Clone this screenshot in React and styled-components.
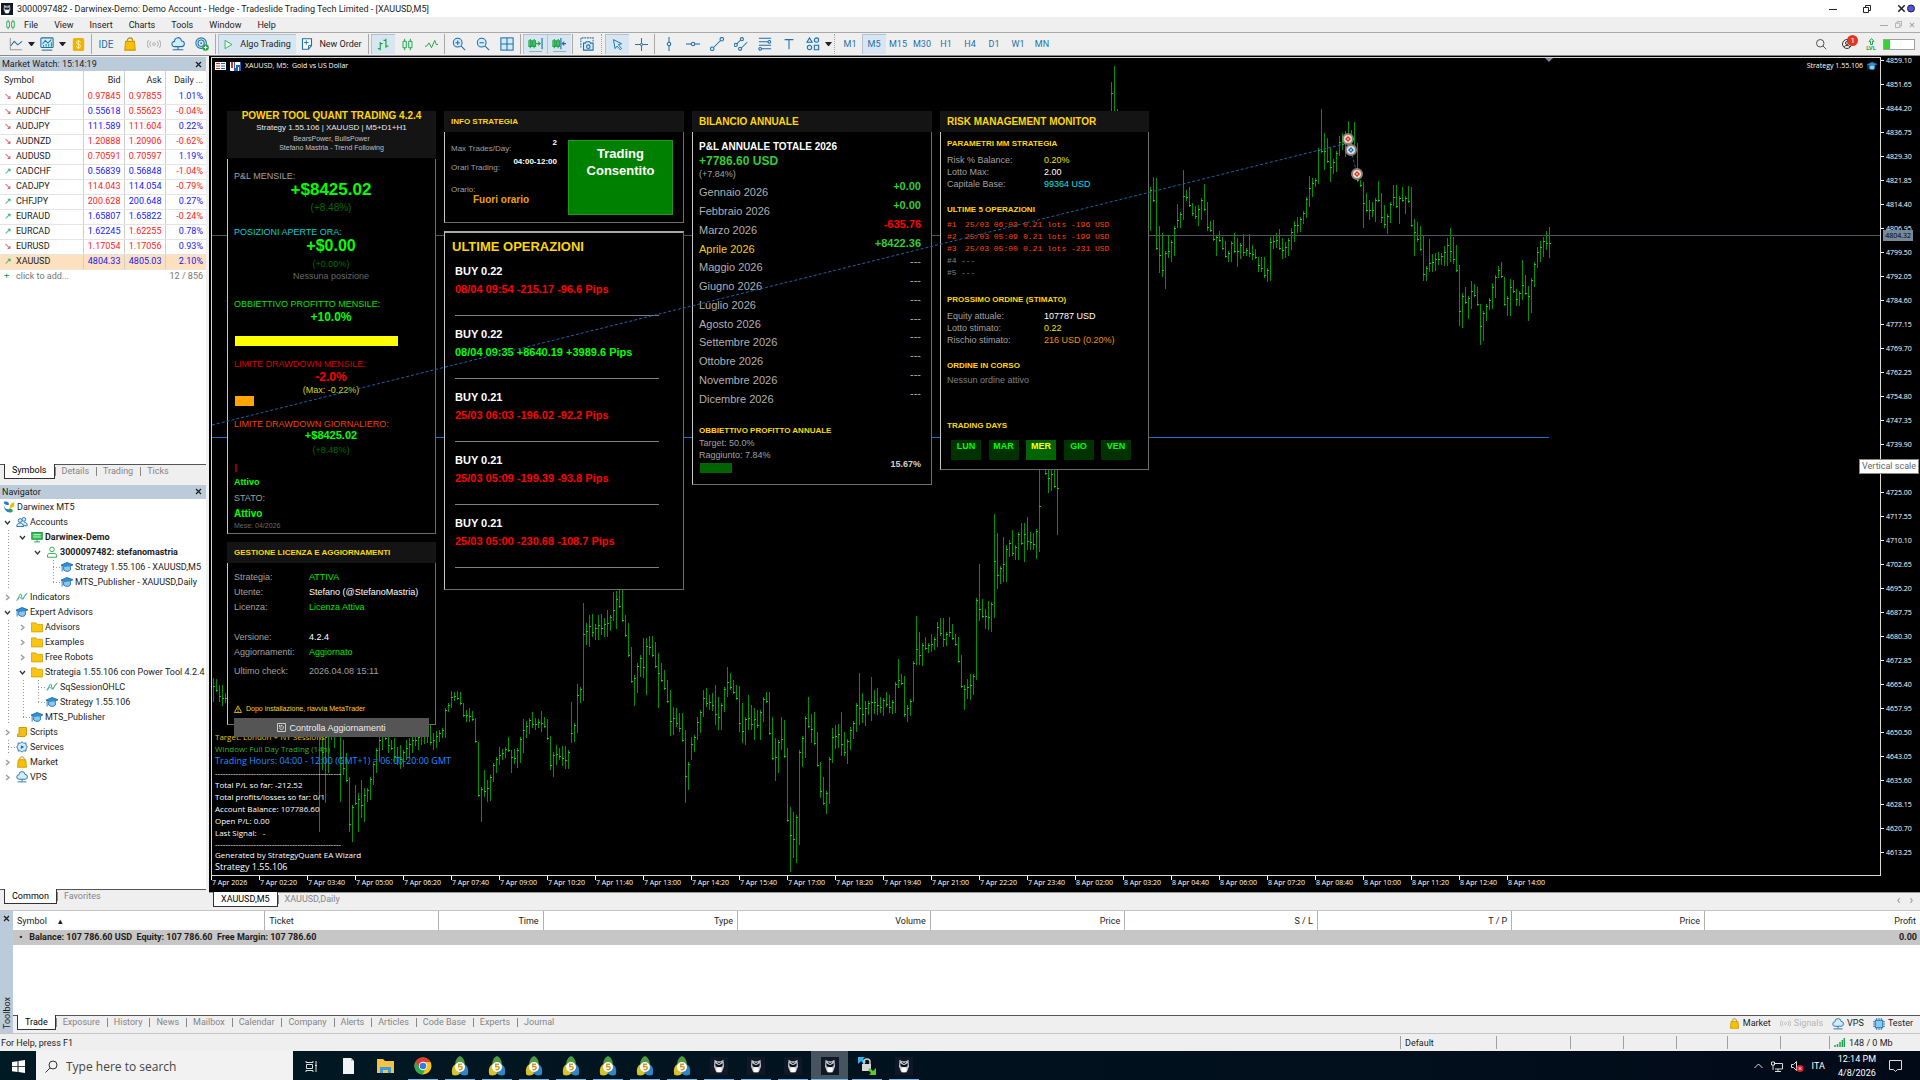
import React from 'react';
import styled, { createGlobalStyle, css } from 'styled-components';

const GlobalStyle = createGlobalStyle`
  * {
    box-sizing: border-box;
  }

  body {
    margin: 0;
    background: #efefef;
    font-family: Roboto, 'Open Sans', sans-serif;
    font-size: 9px;
    color: #1c1c1c;
  }

  button, input {
    font-family: inherit;
    font-size: inherit;
    color: inherit;
    border: none;
    padding: 0;
    margin: 0;
    background: none;
  }

  a {
    color: inherit;
    text-decoration: none;
  }

  svg {
    display: block;
    flex: none;
  }

  ul {
    list-style: none;
    margin: 0;
    padding: 0;
  }
`;

/* ---------- data ---------- */

const quotes = [
  ['AUDCAD', '0.97845', '0.97855', '1.01%', 'down', 'red', 'red'],
  ['AUDCHF', '0.55618', '0.55623', '-0.04%', 'down', 'blue', 'red'],
  ['AUDJPY', '111.589', '111.604', '0.22%', 'down', 'blue', 'red'],
  ['AUDNZD', '1.20888', '1.20906', '-0.62%', 'down', 'red', 'red'],
  ['AUDUSD', '0.70591', '0.70597', '1.19%', 'down', 'red', 'red'],
  ['CADCHF', '0.56839', '0.56848', '-1.04%', 'up', 'blue', 'blue'],
  ['CADJPY', '114.043', '114.054', '-0.79%', 'down', 'red', 'blue'],
  ['CHFJPY', '200.628', '200.648', '0.27%', 'up', 'red', 'blue'],
  ['EURAUD', '1.65807', '1.65822', '-0.24%', 'up', 'blue', 'blue'],
  ['EURCAD', '1.62245', '1.62255', '0.78%', 'up', 'blue', 'red'],
  ['EURUSD', '1.17054', '1.17056', '0.93%', 'down', 'red', 'red'],
  ['XAUUSD', '4804.33', '4805.03', '2.10%', 'up', 'blue', 'blue'],
];

// cells: o = open, c = closed, v = line, t = tee, l = corner, s = empty
const tree = [
  ['', 'mt5', 'Darwinex MT5'],
  ['o', 'users', 'Accounts'],
  ['vo', 'server', 'Darwinex-Demo', true],
  ['vso', 'user', '3000097482: stefanomastria', true],
  ['vsst', 'hat', 'Strategy 1.55.106 - XAUUSD,M5'],
  ['vssl', 'hat', 'MTS_Publisher - XAUUSD,Daily'],
  ['c', 'wave', 'Indicators'],
  ['o', 'hat', 'Expert Advisors'],
  ['vc', 'folder', 'Advisors'],
  ['vc', 'folder', 'Examples'],
  ['vc', 'folder', 'Free Robots'],
  ['vo', 'folder', 'Strategia 1.55.106 con Power Tool 4.2.4'],
  ['vvt', 'wave', 'SqSessionOHLC'],
  ['vvl', 'hat', 'Strategy 1.55.106'],
  ['vl', 'hat', 'MTS_Publisher'],
  ['c', 'script', 'Scripts'],
  ['t', 'gear', 'Services'],
  ['c', 'bag', 'Market'],
  ['c', 'cloud', 'VPS'],
];

const months = [
  ['Gennaio', '+0.00', '#32cd32'],
  ['Febbraio', '+0.00', '#32cd32'],
  ['Marzo', '-635.76', '#ff0000'],
  ['Aprile', '+8422.36', '#32cd32'],
  ['Maggio'], ['Giugno'], ['Luglio'], ['Agosto'],
  ['Settembre'], ['Ottobre'], ['Novembre'], ['Dicembre'],
];

const operations = [
  ['BUY 0.22', '08/04 09:54 -215.17 -96.6 Pips', false],
  ['BUY 0.22', '08/04 09:35 +8640.19 +3989.6 Pips', true],
  ['BUY 0.21', '25/03 06:03 -196.02 -92.2 Pips', false],
  ['BUY 0.21', '25/03 05:09 -199.39 -93.8 Pips', false],
  ['BUY 0.21', '25/03 05:00 -230.68 -108.7 Pips', false],
];

const times = [
  '7 Apr 2026', '7 Apr 02:20', '7 Apr 03:40', '7 Apr 05:00', '7 Apr 06:20', '7 Apr 07:40', '7 Apr 09:00',
  '7 Apr 10:20', '7 Apr 11:40', '7 Apr 13:00', '7 Apr 14:20', '7 Apr 15:40', '7 Apr 17:00', '7 Apr 18:20',
  '7 Apr 19:40', '7 Apr 21:00', '7 Apr 22:20', '7 Apr 23:40', '8 Apr 02:00', '8 Apr 03:20', '8 Apr 04:40',
  '8 Apr 06:00', '8 Apr 07:20', '8 Apr 08:40', '8 Apr 10:00', '8 Apr 11:20', '8 Apr 12:40', '8 Apr 14:00',
];

const prices = Array.from({ length: 34 }, (_, i) => (4859.1 - i * 7.45).toFixed(2));

// the hint box covers this step of the scale
const hintStep = 17;

const dashes = '-'.repeat(49);

// x, high, low of every bar
const bars = [
  [
    [213, 678, 702], [216, 679, 692], [219, 685, 702], [222, 685, 706], [225, 693, 703],
  ],
  [
    [319, 700, 832], [322, 700, 770], [325, 700, 803], [328, 700, 773], [331, 700, 740], [334, 700, 748],
    [337, 700, 730], [340, 700, 802], [343, 740, 775], [346, 753, 782], [349, 777, 832], [352, 805, 842],
    [355, 785, 805], [358, 793, 832], [361, 780, 818], [364, 788, 822], [367, 788, 802], [370, 777, 800],
    [373, 762, 785], [376, 748, 773], [379, 737, 762], [382, 730, 750], [385, 725, 740], [388, 730, 753],
    [391, 740, 750], [394, 738, 762], [397, 747, 765], [400, 745, 769], [403, 750, 767], [406, 740, 760],
    [409, 738, 758], [412, 735, 753], [415, 733, 746], [418, 730, 750], [421, 728, 745], [424, 726, 744],
    [427, 728, 743], [430, 724, 745], [433, 733, 750], [436, 731, 748], [439, 730, 742], [442, 728, 738],
    [445, 708, 738], [448, 703, 712], [451, 691, 708], [454, 692, 701], [457, 691, 700], [460, 692, 705],
    [463, 703, 717], [466, 710, 722], [469, 708, 722], [472, 711, 721], [475, 718, 743], [478, 742, 797],
    [481, 787, 822], [484, 770, 797], [487, 780, 802], [490, 775, 801], [493, 763, 782], [496, 757, 773],
    [499, 747, 765], [502, 749, 760], [505, 747, 758], [508, 737, 752], [511, 750, 773], [514, 749, 764],
    [517, 748, 768], [520, 737, 763], [523, 719, 753], [526, 721, 738], [529, 718, 734], [532, 712, 728],
    [535, 718, 730], [538, 719, 728], [541, 711, 732], [544, 717, 728], [547, 719, 740], [550, 736, 770],
    [553, 752, 777], [556, 745, 765], [559, 748, 760], [562, 746, 766], [565, 746, 769], [568, 750, 769],
    [571, 702, 743], [574, 723, 742], [577, 684, 733], [580, 687, 703], [583, 603, 701], [586, 623, 645],
    [589, 615, 647], [592, 614, 637], [595, 624, 640], [598, 615, 640], [601, 614, 635], [604, 618, 637],
    [607, 610, 637], [610, 615, 631], [613, 592, 621], [616, 591, 629], [619, 590, 608], [622, 590, 622],
    [625, 615, 637], [628, 623, 657], [631, 647, 683], [634, 675, 706], [637, 663, 693], [640, 655, 677],
    [643, 638, 678], [646, 638, 695], [649, 636, 655], [652, 636, 657], [655, 642, 668], [658, 653, 708],
    [661, 663, 682], [664, 670, 690], [667, 680, 703], [670, 690, 736], [673, 707, 735], [676, 708, 727],
    [679, 713, 732], [682, 713, 742], [685, 730, 803], [688, 762, 790], [691, 737, 760], [694, 735, 752],
    [697, 717, 740], [700, 710, 733], [703, 690, 717], [706, 688, 707], [709, 695, 710], [712, 693, 711],
    [715, 685, 725], [718, 697, 730], [721, 703, 730], [724, 687, 712], [727, 667, 697], [730, 673, 690],
    [733, 680, 694], [736, 685, 700], [739, 686, 732], [742, 703, 743], [745, 717, 745], [748, 695, 730],
    [751, 705, 730], [754, 708, 740], [757, 710, 728], [760, 710, 740], [763, 697, 722], [766, 692, 703],
    [769, 692, 735], [772, 717, 760], [775, 738, 781], [778, 740, 773], [781, 717, 750], [784, 720, 758],
    [787, 748, 822], [790, 807, 872], [793, 812, 858], [796, 815, 863], [799, 750, 845], [802, 736, 767],
    [805, 716, 758], [808, 697, 728], [811, 714, 743], [814, 712, 745], [817, 732, 767], [820, 762, 798],
    [823, 777, 805], [826, 791, 814], [829, 757, 804], [832, 728, 763], [835, 725, 749], [838, 724, 748],
    [841, 712, 756], [844, 732, 756], [847, 739, 764], [850, 727, 750], [853, 721, 739], [856, 703, 732],
    [859, 673, 725], [862, 693, 723], [865, 701, 726], [868, 701, 715], [871, 677, 721], [874, 690, 714],
    [877, 688, 715], [880, 697, 713], [883, 698, 716], [886, 692, 707], [889, 695, 713], [892, 700, 714],
    [895, 682, 713], [898, 659, 688], [901, 674, 685], [904, 676, 717], [907, 705, 722], [910, 699, 716],
    [913, 661, 702], [916, 616, 665], [919, 632, 665], [922, 643, 666], [925, 637, 650], [928, 643, 653],
    [931, 634, 652], [934, 637, 650], [937, 622, 647], [940, 618, 636], [943, 618, 647], [946, 632, 646],
    [949, 617, 637], [952, 624, 640], [955, 634, 646], [958, 637, 663], [961, 655, 688], [964, 685, 710],
    [967, 679, 699], [970, 674, 700], [973, 674, 695], [976, 598, 680], [979, 564, 621], [982, 599, 618],
    [985, 609, 629], [988, 601, 630], [991, 602, 632], [994, 514, 618], [997, 533, 589], [1000, 566, 584],
    [1003, 537, 582], [1006, 545, 582], [1009, 540, 557], [1012, 530, 556], [1015, 545, 560], [1018, 532, 560],
    [1021, 523, 545], [1024, 523, 562], [1027, 517, 550], [1030, 532, 550], [1033, 533, 550], [1036, 529, 559],
    [1039, 460, 552],
  ],
  [
    [1045, 460, 475], [1048, 460, 493], [1051, 465, 491], [1054, 460, 488], [1057, 440, 535],
  ],
  [[1111, 82, 120], [1114, 66, 120], [1117, 109, 120]],
  [
    [1150, 187, 231], [1153, 177, 202], [1156, 178, 250], [1159, 226, 273], [1162, 233, 277], [1165, 251, 289],
    [1168, 235, 258], [1171, 240, 262], [1174, 226, 256], [1177, 204, 228], [1180, 212, 228], [1183, 170, 220],
    [1186, 190, 201], [1189, 187, 207], [1192, 203, 216], [1195, 206, 219], [1198, 205, 226], [1201, 198, 220],
    [1204, 184, 211], [1207, 202, 231], [1210, 221, 232], [1213, 220, 241], [1216, 235, 256], [1219, 231, 242],
    [1222, 237, 250], [1225, 241, 258], [1228, 251, 262], [1231, 241, 262], [1234, 233, 253], [1237, 238, 267],
    [1240, 243, 259], [1243, 234, 256], [1246, 248, 256], [1249, 234, 257], [1252, 245, 260], [1255, 249, 259],
    [1258, 257, 272], [1261, 257, 272], [1264, 257, 278], [1267, 268, 282], [1270, 237, 281], [1273, 235, 249],
    [1276, 233, 248], [1279, 229, 250], [1282, 238, 259], [1285, 242, 258], [1288, 238, 256], [1291, 228, 250],
    [1294, 221, 242], [1297, 217, 233], [1300, 217, 232], [1303, 211, 224], [1306, 197, 218], [1309, 176, 207],
    [1312, 178, 197], [1315, 178, 187], [1318, 148, 184], [1321, 109, 153], [1324, 133, 170], [1327, 138, 163],
    [1330, 148, 182], [1333, 159, 174], [1336, 151, 172], [1339, 136, 156], [1342, 133, 150], [1345, 131, 157],
    [1348, 121, 147], [1351, 130, 150], [1354, 122, 150], [1357, 143, 182], [1360, 180, 187], [1363, 182, 228],
    [1366, 193, 212], [1369, 200, 220], [1372, 202, 217], [1375, 198, 222], [1378, 181, 202], [1381, 193, 223],
    [1384, 205, 228], [1387, 214, 234], [1390, 202, 223], [1393, 185, 206], [1396, 185, 208], [1399, 196, 224],
    [1402, 187, 202], [1405, 196, 214], [1408, 186, 203], [1411, 187, 227], [1414, 219, 256], [1417, 222, 242],
    [1420, 226, 251], [1423, 235, 281], [1426, 266, 281], [1429, 239, 272], [1432, 254, 272], [1435, 253, 271],
    [1438, 252, 265], [1441, 253, 265], [1444, 246, 266], [1447, 238, 266], [1450, 228, 262], [1453, 237, 264],
    [1456, 245, 272], [1459, 265, 326], [1462, 293, 328], [1465, 287, 304], [1468, 296, 319], [1471, 281, 309],
    [1474, 284, 297], [1477, 287, 306], [1480, 304, 345], [1483, 311, 341], [1486, 304, 321], [1489, 298, 310],
    [1492, 283, 309], [1495, 275, 298], [1498, 266, 278], [1501, 262, 278], [1504, 277, 306], [1507, 296, 316],
    [1510, 279, 316], [1513, 280, 293], [1516, 289, 306], [1519, 291, 306], [1522, 260, 300], [1525, 275, 295],
    [1528, 286, 321], [1531, 278, 313], [1534, 262, 287], [1537, 247, 268], [1540, 241, 262], [1543, 237, 257],
    [1546, 231, 250], [1549, 227, 258],
  ],
];

const boxTabs = [
  'Exposure', 'History', 'News', 'Mailbox', 'Calendar', 'Company',
  'Alerts', 'Articles', 'Code Base', 'Experts', 'Journal',
];

/* ---------- icons ---------- */

const blue = '#1f6fab';
const sky = '#d3ebfa';

const glyphs = {
  line: <><path d="M1.500 1v13.500H15" stroke="#999" /><path d="M2 10l4-5 4 4 5-4" stroke={blue} /></>,
  template: <><rect x="1" y="1" width="14" height="11" rx="1" stroke={blue} fill={sky} /><path d="M3 8l3-4 3 3 4-4" stroke={blue} /><path d="M4 11V9m3 2V8m3 3V8m3 3V6" stroke="#1a9a6a" /><path d="M2 15h12" stroke={blue} /></>,
  dollar: <><rect x="1" y="0" width="14" height="16" rx="2" fill="#f0b400" stroke="none" /><path d="M10.500 5.500c0-1-1-1.700-2.500-1.700S5.500 4.500 5.500 5.700c0 2.800 5 1.500 5 4.400 0 1.300-1 2-2.500 2s-2.500-.8-2.500-2M8 2.500v11" stroke="#fff3b0" /></>,
  bag: <><path d="M5 6V4a3 3 0 0 1 6 0v2" stroke="#b98700" /><path d="M3 5h10l1 10H2z" fill="#f7c000" stroke="#d09a00" /></>,
  signal: <><path d="M4.500 5a4.500 4.500 0 0 0 0 6M2 3.500a7.500 7.500 0 0 0 0 9M11.500 5a4.500 4.500 0 0 1 0 6M14 3.500a7.500 7.500 0 0 1 0 9" stroke="#b5b5b5" /><circle cx="8" cy="8" r="1.500" stroke="#b5b5b5" /></>,
  cloud: <><path d="M4 11a3 3 0 0 1 0-6 4 4 0 0 1 8-.5A3.200 3.200 0 0 1 12 11z" fill={sky} stroke={blue} /><path d="M8 11v3M2 14.500h12" stroke={blue} /></>,
  globe: <><circle cx="7" cy="7" r="6" stroke={blue} fill={sky} /><circle cx="7" cy="7" r="3.500" stroke={blue} /><circle cx="7" cy="7" r="1" fill={blue} stroke="none" /><circle cx="12" cy="12" r="3.800" fill="#25a845" stroke="none" /><path d="M12 10v4M10 12h4" stroke="#fff" /></>,
  play: <path d="M3 2l10 6-10 6z" stroke="#1fa64a" fill="#e9fbef" />,
  order: <><path d="M2 1h12v9l-4 5H2z" fill="#fff" stroke={blue} strokeWidth="1.500" /><path d="M7 3v6M4 6h6M14 10h-4v5" stroke={blue} /></>,
  ohlc: <path d="M4 5v10M1 13h3M4 7h3M11 1v11M8 3h3M11 10h3" stroke="#1fa64a" strokeWidth="1.500" />,
  candles: <path d="M4.500 1v3m0 8v3M2.500 4h4v8h-4zM11.500 1v3m0 8v3M9.500 4h4v8h-4z" stroke="#1fa64a" />,
  zig: <path d="M0 10h2l3-4 3 6 4-9 2 5h2" stroke="#1fa64a" />,
  zoomIn: <><circle cx="6.500" cy="6.500" r="5" stroke={blue} fill={sky} /><path d="M10.500 10.500L15 15M6.500 4v5M4 6.500h5" stroke={blue} /></>,
  zoomOut: <><circle cx="6.500" cy="6.500" r="5" stroke={blue} fill={sky} /><path d="M10.500 10.500L15 15M4 6.500h5" stroke={blue} /></>,
  tiles: <><rect x="1" y="1" width="14" height="14" fill={sky} stroke={blue} /><path d="M8 1v14M1 8h14" stroke={blue} /></>,
  shift: <><path d="M2.500 2v10M1 4h3v6H1zM6.500 2v10M5 4h3v6H5z" stroke="#1fa64a" /><path d="M8.500 7H13M11 5l2 2-2 2" stroke="#1fa64a" /><path d="M15 1v12" stroke={blue} /><path d="M1 15.500h14" stroke="#9ab" /></>,
  scroll: <><path d="M2.500 2v10M1 4h3v6H1zM6.500 2v10M5 4h3v6H5z" stroke="#1fa64a" /><path d="M9.500 1v12M15 7h-4M13 5l-2 2 2 2" stroke={blue} /><path d="M1 15.500h14" stroke="#9ab" /></>,
  camera: <><path d="M1 12V1h14v4" stroke={blue} strokeDasharray="2 1" /><path d="M4 7h2l1-1.500h4L12 7h3v8H4z" fill={sky} stroke={blue} /><circle cx="9.500" cy="11" r="2" stroke={blue} /></>,
  cursor: <path d="M3 2l10 5-4 1 4 5-1.500 1.500L7.500 10 5 13z" fill={sky} stroke={blue} />,
  cross: <><path d="M8 0v16M0 8h16" stroke={blue} /><circle cx="8" cy="8" r="1.500" fill={sky} stroke={blue} /></>,
  vline: <><path d="M8 0v16" stroke={blue} /><circle cx="8" cy="8" r="2" fill={sky} stroke={blue} /></>,
  hline: <><path d="M0 8h16" stroke={blue} /><circle cx="8" cy="8" r="2" fill={sky} stroke={blue} /></>,
  trend: <><path d="M2 14L14 2" stroke={blue} /><circle cx="2.500" cy="13.500" r="2" fill={sky} stroke={blue} /><circle cx="13.500" cy="2.500" r="2" fill={sky} stroke={blue} /></>,
  channel: <><path d="M2 9l7-7M7 14l8-8" stroke={blue} /><circle cx="2" cy="9" r="1.800" fill={sky} stroke={blue} /><circle cx="9" cy="2.500" r="1.800" fill={sky} stroke={blue} /><circle cx="7" cy="13.500" r="1.800" fill={sky} stroke={blue} /></>,
  fibo: <><path d="M1 1.500h14M1 5.500h12M1 9.500h14M4 13.500h11" stroke={blue} /><circle cx="13" cy="5.500" r="1.600" fill={sky} stroke={blue} /><circle cx="2.500" cy="13.500" r="1.600" fill={sky} stroke={blue} /></>,
  text: <path d="M3 3h10M8 3v11" stroke={blue} />,
  shapes: <><path d="M4 1l3 5H1zM9.500 9.500h5v5h-5z" fill={sky} stroke={blue} /><circle cx="12" cy="3.500" r="2.500" fill={sky} stroke={blue} /><circle cx="4" cy="12" r="2.500" fill={sky} stroke={blue} /></>,
  search: <><circle cx="7" cy="7" r="5" stroke="#444" /><path d="M10.500 10.500L15 15" stroke="#444" /></>,
  users: <><circle cx="10.500" cy="4.500" r="2.500" fill={sky} stroke={blue} /><path d="M7 13h8c0-3-1.500-5-4.500-5" stroke={blue} fill={sky} /><circle cx="5.500" cy="6" r="2.500" fill={sky} stroke={blue} /><path d="M1 14c0-3 1.500-4.500 4.500-4.500S10 11 10 14z" fill={sky} stroke={blue} /></>,
  server: <><rect x="1" y="2" width="14" height="9" fill="#2fbf52" stroke="#179a38" /><path d="M3 5h10M3 8h10" stroke="#e9fbef" /><path d="M8 11v3M4 14.500h8" stroke="#179a38" /></>,
  user: <><circle cx="8" cy="4.500" r="3" stroke="#1fa64a" /><path d="M2 15v-2c0-2 1-3 3-3h6c2 0 3 1 3 3v2z" stroke="#1fa64a" /></>,
  hat: <><path d="M0 5.500L8 2l8 3-8 4z" fill="#2f8fd0" stroke={blue} /><path d="M3.500 8v4c3 2.500 7 2.500 9 0V7" fill="#8cc8ee" stroke={blue} /><path d="M1.500 6v8" stroke={blue} /></>,
  wave: <><path d="M1 13c3-2 3-9 5-9s1 7 3 7 2-7 6-8" stroke="#1fa64a" /><path d="M1 11l4-3 3 3 6-7" stroke="#5aa5dc" /></>,
  folder: <path d="M0.500 2.500h6l1.500 2h7.500v10h-15z" fill="#f9c513" stroke="#d9a400" />,
  script: <path d="M4 2h10v10l-2 2H2v-3h2z" fill="#f3bd18" stroke="#c99100" />,
  gear: <><path d="M8 1l2 2 3-.5.500 3L15 8l-1.500 2.500-.5 3-3-.5-2 2-2-2-3 .5-.5-3L1 8l1.500-2.500.5-3 3 .5z" fill={sky} stroke={blue} /><path d="M6.500 5.500v5L11 8z" fill={blue} stroke="none" /></>,
  chip: <><rect x="3" y="3" width="10" height="10" fill="#8cc8ee" stroke={blue} /><path d="M5 0v3m3-3v3m3-3v3M5 13v3m3-3v3m3-3v3M0 5h3m-3 3h3m-3 3h3M13 5h3m-3 3h3m-3 3h3" stroke={blue} /></>,
  mt5: <><path d="M1 1c4-1 7 0 7 4-3 1-7 0-7-4z" fill="#1f7fc8" stroke="none" /><path d="M15 2c1 5-2 8-6 7 0-4 2-7 6-7z" fill="#f5b800" stroke="none" /><path d="M1 5c1 5 3 6 7 6v4C4 15 1 10 1 5z" fill="#1f7fc8" stroke="none" /><path d="M8 10c3 0 5 1 5 3s-3 3-5 2z" fill="#2aa34a" stroke="none" /></>,
};

const Icon = ({ name, size = 13 }) => (
  <svg width={size} height={size} viewBox="0 0 16 16" fill="none" strokeWidth="1.200" aria-hidden="true">{glyphs[name]}</svg>
);

const Owl = ({ size = 18 }) => (
  <svg width={size} height={size} viewBox="0 0 16 16" aria-hidden="true">
    <rect width="16" height="16" fill="#101827" />
    <path d="M4 2.500l2.500 1.200h3L12 2.500l.5 6-2 5h-5l-2-5z" fill="#b9bdc4" />
    <path d="M4.500 5.500L7.500 7h1l3-1.500-.5 2.500-1.500 1h-3L5 8z" fill="#10131a" />
    <path d="M6 9h4l.5 2-1 2.500h-3l-1-2.500z" fill="#fff" />
    <path d="M6.500 4.800L8 6l1.500-1.200" fill="none" stroke="#10131a" strokeWidth="0.800" />
  </svg>
);

const MetaTrader = () => (
  <svg width="18" height="20" viewBox="0 0 18 20" aria-hidden="true">
    <path d="M9 0c4 2 5.500 6 4.500 11h-9C3.500 6 5 2 9 0z" fill="#4f9a45" />
    <path d="M4.500 8C1 10 0 15 1.500 19c3 1 6 .5 8-2z" fill="#d8c22c" />
    <path d="M13.500 8c3.500 2 4.500 7 3 11-3 1-6 .5-8-2z" fill="#2f86c4" />
    <circle cx="9" cy="11" r="5" fill="#fff" />
    <path d="M11 8.300H7.700v2.500c3-.8 4 .4 3.300 1.900-.6 1.200-2.300 1.300-3.500.7" fill="none" stroke="#d99a20" strokeWidth="1.500" />
  </svg>
);

const Chrome = () => (
  <svg width="18" height="18" viewBox="0 0 18 18" aria-hidden="true">
    <circle cx="9" cy="9" r="8.500" fill="#f9c513" />
    <path d="M9 9L1.600 4.700A8.500 8.500 0 0 0 8.600 17.500L12 11z" fill="#2da94f" />
    <path d="M9 5h7.500A8.500 8.500 0 0 0 1.600 4.700L5 10z" fill="#e33b2e" />
    <circle cx="9" cy="9" r="4.200" fill="#fff" />
    <circle cx="9" cy="9" r="3.300" fill="#2f7de1" />
  </svg>
);

/* ---------- window frame ---------- */

const Page = styled.div`
  display: flex;
  flex-direction: column;
  min-height: 100vh;
`;

const TitleBar = styled.header`
  display: flex;
  align-items: center;
  gap: 4px;
  height: 17px;
  padding-left: 1px;
  background: #fff;
`;

const TitleText = styled.h1`
  flex: 1;
  margin: 0;
  font-size: 9px;
  font-weight: 400;
  line-height: 16px;
`;

const WindowButtons = styled.div`
  display: flex;
  align-items: center;
  gap: ${(p) => p.$gap}px;
  padding-right: ${(p) => p.$right}px;
  color: ${(p) => p.$color};

  button {
    display: flex;
  }
`;

const MenuBar = styled.nav`
  display: flex;
  align-items: center;
  height: 16px;
  padding-left: 5px;
  border-bottom: 1px solid #a9a9a9;

  > button {
    padding: 0 8px;
    line-height: 14px;
  }
`;

const Spacer = styled.div`
  flex: 1;
`;

const ToolBar = styled.div`
  display: flex;
  align-items: stretch;
  height: 23px;
  padding: 1px 0 1px 4px;
  border-bottom: 1px solid #8a8a8a;
`;

const Tool = styled.button`
  display: flex;
  align-items: center;
  justify-content: center;
  gap: 6px;
  width: ${(p) => p.$w || 24}px;
  color: ${(p) => (p.$dark ? '#1c1c1c' : '#1f6fab')};
  font-size: ${(p) => (p.$dark ? 9 : 10)}px;
  ${(p) => p.$on && css`
    background: #d8e6f2;
    box-shadow: inset 1px 1px 0 #b4c2ce;
  `}
`;

const TimeFrame = styled(Tool)`
  font-size: 9px;
`;

const Caret = styled.span`
  align-self: center;
  width: 7px;
  border: 3px solid transparent;
  border-top: 4px solid #222;
  border-bottom: 0;
`;

const Divider = styled.span`
  width: 1px;
  margin: 0 ${(p) => (p.$dots ? 3 : 2)}px 0 ${(p) => (p.$dots ? 2 : 1)}px;
  border-left: 1px ${(p) => (p.$dots ? 'dotted' : 'solid')} #a8a8a8;
`;

const Account = styled.span`
  position: relative;
  align-self: center;
  margin: 0 14px;
`;

const Badge = styled.span`
  position: absolute;
  left: 5px;
  top: -4px;
  width: 11px;
  height: 11px;
  border-radius: 50%;
  background: #e0371f;
  color: #fff;
  font-size: 8px;
  line-height: 11px;
  text-align: center;
`;

const Level = styled.span`
  align-self: center;
  display: flex;
  flex-direction: column;
  align-items: center;
  color: #1fa64a;
  font-size: 6px;
  font-weight: 700;
  line-height: 6px;
`;

const Meter = styled.span`
  align-self: center;
  width: 32px;
  height: 11px;
  margin: 0 5px 0 7px;
  border: 1px solid #a0a0a0;
  background: linear-gradient(90deg, #35d435 6px, #fff 6px);
`;

const Main = styled.main`
  flex: 1;
  display: grid;
  grid-template-columns: 206px minmax(0, 1fr);
  column-gap: 3px;
`;

const Side = styled.aside`
  display: grid;
  grid-template-columns: minmax(0, 1fr);
  grid-template-rows: 1fr 1fr;
  row-gap: 2px;
  min-height: 0;
  padding-top: 1px;
`;

const Dock = styled.section`
  display: flex;
  flex-direction: column;
  min-height: 0;
  background: #fff;
`;

const DockHead = styled.h2`
  display: flex;
  align-items: center;
  justify-content: space-between;
  height: 14px;
  margin: 0;
  padding: 0 4px 0 2px;
  background: #bccbda;
  font-size: 9px;
  font-weight: 400;
`;

const Watch = styled.table`
  width: 100%;
  border-collapse: collapse;
  table-layout: fixed;

  th, td {
    height: 15px;
    padding: 0 3px 0 0;
    border-right: 1px solid #cfcfcf;
    border-bottom: 1px solid #e4e4e4;
    font-weight: 400;
    line-height: 13px;
    text-align: right;
    white-space: nowrap;
  }

  th {
    height: 18px;
    border-bottom: none;
  }

  th:last-child, td:last-child {
    border-right: none;
  }

  th:first-child, td:first-child {
    padding-left: 4px;
    text-align: left;
  }

  tr.selected td {
    background: #fde0bd;
  }

  tr.foot td {
    border: none;
    color: #777;
  }
`;

const Quote = styled.td`
  color: ${(p) => (p.$tone === 'red' ? '#ff1a1a' : '#1818ff')};
`;

const Arrow = styled.span`
  display: inline-block;
  width: 12px;
  color: ${(p) => (p.$up ? '#1fa64a' : '#e03c3c')};
`;

const Tabs = styled.div`
  display: flex;
  align-items: flex-start;
  height: ${(p) => p.$h}px;
  margin-top: auto;
  padding-left: 4px;
  background: #efefef;
  border-top: 1px solid ${(p) => p.$line || '#555'};
`;

const Tab = styled.button`
  height: ${(p) => (p.$on ? 15 : 13)}px;
  padding: 0 7px;
  line-height: 13px;
  color: ${(p) => (p.$on ? '#000' : '#858585')};
  ${(p) => p.$on && css`
    margin-top: -1px;
    background: #fff;
    border: 1px solid #333;
    border-top: none;
  `}

  & + & {
    ${(p) => p.$bar && css`
      background: linear-gradient(#888, #888) left center / 1px 9px no-repeat;
    `}
  }
`;

const TreeList = styled.ul`
  padding-top: 1px;
`;

const TreeRow = styled.li`
  display: flex;
  align-items: center;
  height: 15px;
  padding-left: ${(p) => (p.$root ? 2 : 0)}px;
  font-weight: ${(p) => (p.$bold ? 700 : 400)};
  white-space: nowrap;
`;

const TreeCell = styled.span`
  flex: none;
  display: flex;
  align-items: center;
  justify-content: center;
  width: 15px;
  height: 15px;
  ${(p) => 'vtl'.includes(p.$kind) && css`
    background: repeating-linear-gradient(#999 0 1px, transparent 1px 3px) 8px 0 / 1px ${p.$kind === 'l' ? '8px' : '15px'} no-repeat${p.$kind === 'v' ? '' : ', repeating-linear-gradient(90deg, #999 0 1px, transparent 1px 3px) 8px 7px / 8px 1px no-repeat'};
  `}
`;

const TreeIcon = styled.span`
  flex: none;
  display: flex;
  justify-content: center;
  width: 14px;
  margin-right: 1px;
`;

/* ---------- chart ---------- */

const ChartArea = styled.section`
  display: flex;
  flex-direction: column;
  min-width: 0;
`;

const Chart = styled.div`
  position: relative;
  flex: 1;
  display: grid;
  grid-template-columns: minmax(0, 1fr) 39px;
  grid-template-rows: minmax(0, 1fr) 16px;
  padding: 1px 0 0 2px;
  background: #000;
  color: #fff;
  font-family: 'Open Sans', 'Noto Sans', sans-serif;
`;

const Plot = styled.div`
  position: relative;
  padding: 53px 0 0 15px;
  border: 1px solid #d8d8d8;
  overflow: hidden;
`;

const Canvas = styled.svg`
  position: absolute;
  inset: 0;
  width: 100%;
  height: 100%;
  pointer-events: none;
`;

const Caption = styled.div`
  position: absolute;
  top: 3px;
  ${(p) => (p.$right ? 'right: 3px;' : 'left: 3px;')}
  display: flex;
  align-items: center;
  gap: 4px;
  font-size: 7px;
  line-height: 10px;
`;

const PriceAxis = styled.div`
  overflow: hidden;
  height: 819px;
`;

const PriceList = styled.ul`
  margin-top: -9px;

  li {
    display: flex;
    align-items: center;
    gap: 2px;
    height: 24px;
    font-size: 7px;
    line-height: 7px;
  }

  li::before {
    content: '';
    width: 3px;
    height: 1px;
    background: #fff;
  }
`;

const PriceTag = styled.div`
  position: absolute;
  top: 174px;
  right: 7px;
  padding: 0 2px;
  background: #778899;
  color: #000;
  font-size: 7px;
  line-height: 11px;
`;

const Tooltip = styled.div`
  position: absolute;
  top: 403px;
  right: 1px;
  padding: 0 2px;
  border: 1px solid #888;
  background: #fff;
  color: #666;
  font-family: Roboto, sans-serif;
  line-height: 13px;
  white-space: nowrap;
`;

const TimeAxis = styled.ul`
  grid-column: 1 / -1;
  display: flex;

  li {
    width: 48px;
    height: 4px;
    border-left: 1px solid #fff;
    font-size: 7px;
    line-height: 14px;
    white-space: nowrap;
  }
`;

const Comments = styled.div`
  position: absolute;
  left: 3px;
  bottom: 2px;
  white-space: pre;
`;

const Comment = styled.div`
  color: ${(p) => p.$color || '#fff'};
  font-size: ${(p) => (p.$big ? 9 : 8)}px;
  line-height: ${(p) => p.$h || 12}px;
`;

const Board = styled.div`
  position: relative;
  display: flex;
  align-items: flex-start;
  gap: 8px;
  font-family: 'Liberation Sans', Arial, sans-serif;
`;

const Column = styled.div`
  display: flex;
  flex-direction: column;
  gap: 8px;
  flex: none;
  width: ${(p) => p.$w}px;
`;

const PanelHead = styled.h3`
  height: 21px;
  margin: 0;
  padding-left: 7px;
  background: #141414;
  color: #ffd700;
  font-size: ${(p) => p.$size || 8}px;
  line-height: 22px;
`;

const MainHead = styled.header`
  height: 48px;
  background: #141414;
  border-bottom: 1px solid #000;
  text-align: center;
  overflow: hidden;
`;

const PanelBody = styled.div`
  padding: ${(p) => p.$pad};
  background: #000;
  border: 1px solid #6c6c6c;
  border-left-color: #c8c8c8;
  border-top: ${(p) => (p.$top ? '2px solid #a8a8a8' : 'none')};
`;

const Line = styled.div`
  margin: ${(p) => p.$gap || 0}px 0 ${(p) => p.$below || 0}px;
  padding-left: ${(p) => p.$indent || 0}px;
  color: ${(p) => p.$color || '#a0a0a0'};
  font-size: ${(p) => p.$size || 9}px;
  font-weight: ${(p) => (p.$bold ? 700 : 400)};
  line-height: ${(p) => p.$h || 12}px;
  text-align: ${(p) => (p.$center ? 'center' : 'inherit')};
  white-space: nowrap;
`;

const Bar = styled.div`
  width: ${(p) => p.$w}px;
  height: ${(p) => p.$h || 10}px;
  margin: ${(p) => p.$gap || 0}px 0 0 1px;
  background: ${(p) => p.$color};
`;

const Pairs = styled.dl`
  display: grid;
  grid-template-columns: ${(p) => p.$col}px 1fr;
  margin: ${(p) => p.$gap || 0}px 0 0;
  font-size: 9px;
  line-height: ${(p) => p.$h}px;
  white-space: nowrap;

  dt {
    color: #a0a0a0;
  }
`;

const Value = styled.dd`
  margin: 0;
  color: ${(p) => p.$color || '#fff'};
`;

const Warning = styled.div`
  display: flex;
  align-items: center;
  gap: 4px;
  margin-top: 24px;
  color: #ffd700;
  font-size: 7px;
  line-height: 12px;
`;

const UpdateButton = styled.button`
  display: flex;
  align-items: center;
  justify-content: center;
  gap: 3px;
  width: 195px;
  height: 19px;
  margin: 3px 0 -13px;
  background: #555;
  color: #eee;
  font-size: 9px;
`;

const InfoBody = styled(PanelBody)`
  display: flex;
  height: 91px;
`;

const InfoValues = styled.div`
  flex: 1;
  padding: 5px 11px 0 0;
  text-align: right;
`;

const InfoLabels = styled.div`
  width: 60px;
`;

const Permission = styled.div`
  flex: none;
  width: 105px;
  height: 75px;
  margin: 8px 10px 0 0;
  padding-top: 4px;
  border: 1px solid #1d9a1d;
  background: #008000;
  font-size: 13px;
  font-weight: 700;
  line-height: 17px;
  text-align: center;
`;

const Operation = styled.li`
  height: 63px;
  margin: 0 24px 0 3px;
  font-size: 11px;
  font-weight: 700;
  line-height: 14px;

  p {
    margin: 4px 0 19px;
    color: ${(p) => (p.$gain ? '#00ff00' : '#ff0000')};
  }

  hr {
    margin: 0;
    border: none;
    border-top: 1px solid #808080;
  }
`;

const Months = styled.ul`
  display: grid;
  grid-auto-rows: 1fr;
  height: 225px;
  margin-top: 3px;
`;

const Month = styled.li`
  display: flex;
  align-items: center;
  justify-content: space-between;
  color: ${(p) => (p.$current ? '#f0d000' : '#b0b0b0')};
  font-size: 11px;
  line-height: 12px;
`;

const MonthValue = styled.span`
  padding-bottom: 12px;
  color: ${(p) => p.$color || '#b0b0b0'};
  font-weight: ${(p) => (p.$color ? 700 : 400)};
  line-height: 6px;
`;

const Split = styled.div`
  display: flex;
  align-items: flex-end;
  justify-content: space-between;
`;

const LotList = styled.ul`
  margin-top: 3px;
`;

const Lots = styled.li`
  display: grid;
  grid-template-columns: ${(p) => (p.$empty ? '14px' : '18px')} 58px 48px auto;
  color: ${(p) => (p.$empty ? '#808080' : '#ff4500')};
  font-family: 'Liberation Mono', monospace;
  font-size: 8px;
  line-height: 12px;
  white-space: nowrap;
`;

const Days = styled.div`
  display: flex;
  justify-content: space-between;
  width: 180px;
  margin: 8px 0 0 4px;
`;

const Day = styled.button`
  width: 30px;
  height: 20px;
  padding-bottom: 8px;
  background: ${(p) => (p.$on ? '#006400' : '#003200')};
  color: ${(p) => (p.$on ? '#ffff00' : '#00ff00')};
  font-size: 9px;
  font-weight: 700;
  line-height: 12px;
`;

/* ---------- toolbox ---------- */

const ToolBox = styled.section`
  display: flex;
  border-top: 1px solid #c4c4c4;
  border-bottom: 1px solid #c4c4c4;
`;

const ToolBoxEdge = styled.div`
  display: flex;
  flex-direction: column;
  align-items: center;
  justify-content: space-between;
  width: 13px;
  padding: 4px 0;
  background: #bccbda;

  span {
    writing-mode: vertical-rl;
    transform: rotate(180deg);
  }
`;

const ToolBoxBody = styled.div`
  flex: 1;
  display: flex;
  flex-direction: column;
  height: 122px;
  background: #fff;
`;

const TradeTable = styled.table`
  width: 100%;
  border-collapse: collapse;
  table-layout: fixed;

  th {
    height: 19px;
    padding: 0 4px;
    border-right: 1px solid #b0b0b0;
    font-weight: 400;
    text-align: right;
  }

  th:last-child {
    border-right: none;
  }

  th:nth-child(-n + 2) {
    text-align: left;
  }

  td {
    height: 15px;
    padding: 0 4px;
    background: #c6c6c6;
    font-weight: 700;
    line-height: 13px;
    white-space: pre;
  }

  td:last-child {
    padding-right: 3px;
    text-align: right;
  }
`;

const Services = styled.div`
  display: flex;
  align-items: center;
  gap: 9px;
  margin-left: auto;
  padding-right: 7px;
  line-height: 15px;
`;

const ScrollArrows = styled(Services)`
  color: #888;
  font-size: 12px;
  line-height: 14px;
`;

const Service = styled.a`
  display: flex;
  align-items: center;
  gap: 3px;
  color: ${(p) => (p.$off ? '#b5b5b5' : '#1c1c1c')};
`;

const StatusBar = styled.footer`
  display: flex;
  align-items: center;
  height: 17px;
  padding-left: 1px;
`;

const StatusCell = styled.div`
  display: flex;
  align-items: center;
  gap: 4px;
  width: ${(p) => p.$w}px;
  height: 13px;
  padding-left: 4px;
  border-left: 1px solid #a0a0a0;
`;

const TaskBar = styled.div`
  display: flex;
  height: 30px;
  background: linear-gradient(90deg, #001a24, #020a18);
  color: #fff;
`;

const Start = styled.button`
  display: flex;
  align-items: center;
  justify-content: center;
  width: 36px;
`;

const Search = styled.label`
  display: flex;
  align-items: center;
  gap: 8px;
  width: 257px;
  padding-left: 9px;
  background: #f2f2f2;
  color: #444;

  input {
    flex: 1;
    min-width: 0;
    outline: none;
    font-family: 'Open Sans', sans-serif;
    font-size: 12px;
  }

  input::placeholder {
    color: #444;
    opacity: 1;
  }
`;

const TaskButton = styled.button`
  display: flex;
  align-items: center;
  justify-content: center;
  width: 37px;
  background: ${(p) => (p.$on ? '#47545f' : 'none')};
  ${(p) => p.$run && css`
    background-image: linear-gradient(#76b9ed, #76b9ed);
    background-size: ${p.$on ? '100%' : '30px'} 2px;
    background-position: center bottom;
    background-repeat: no-repeat;
  `}
`;

const Tray = styled.div`
  display: flex;
  align-items: center;
  margin-left: auto;
  gap: 8px;
  padding-right: 18px;
`;

const Clock = styled.time`
  margin: 0 5px;
  line-height: 14px;
  text-align: center;
`;

/* ---------- parts ---------- */

const Chevron = ({ open }) => (
  <svg width="7" height="7" viewBox="0 0 7 7" fill="none" stroke={open ? '#333' : '#999'} strokeWidth="1.300">
    <path d={open ? 'M1 2l2.500 3L6 2' : 'M2 1l3 2.500L2 6'} />
  </svg>
);

const Close = ({ size = 7 }) => (
  <svg width={size} height={size} viewBox="0 0 7 7" stroke="currentColor" strokeWidth="1.200"><path d="M1 1l5 5M6 1L1 6" /></svg>
);

const Restore = ({ size = 8 }) => (
  <svg width={size} height={size} viewBox="0 0 8 8" fill="none" stroke="currentColor"><path d="M.5 2.500h5v5h-5zM2.500 2.500v-2h5v5h-2" /></svg>
);

const Minimize = () => <svg width="8" height="8" viewBox="0 0 8 8" stroke="currentColor"><path d="M0 4.500h8" /></svg>;

const barPath = bars.flat().map(([x, hi, lo]) => `M${x + 0.5} ${hi}V${lo}`).join('');

// close ticks lean towards the middle of the next bar
const tickPath = bars.map((run) => run.map(([x, hi, lo], i) => {
  const next = run[i + 1] || run[i];
  const close = Math.min(lo - 2, Math.max(hi + 2, Math.round((next[1] + next[2]) / 2)));
  return `M${x} ${close + 0.5}h2`;
}).join('')).join('');

const Marker = ({ x, y, color }) => (
  <g>
    <circle cx={x} cy={y} r="5" fill="#e8e0da" stroke="#8a8078" strokeWidth="2" />
    <path d={`M${x} ${y - 3}l3 3-3 3-3-3z`} fill={color} />
    <path d={`M${x - 1} ${y}h2`} stroke="#fff" />
  </g>
);

const PriceBars = () => (
  <Canvas aria-label="XAUUSD M5 bars">
    <g transform="translate(-212 -58)" fill="none">
      <path d="M212 235.500H1920" stroke="#4c565e" />
      <path d="M212 437.500H1549" stroke="#1c72c8" />
      <path d={barPath} stroke="#009400" />
      <path d={tickPath} stroke="#00d800" />
      <path d="M1545 58h8l-4 4z" fill="#778899" />
    </g>
  </Canvas>
);

const TradeLines = () => (
  <Canvas>
    <g transform="translate(-212 -58)" fill="none">
      <path d="M212 425L1348 143M1351 150L1357 174" stroke="#1c62a8" strokeDasharray="3 2" />
      <Marker x={1348} y={139} color="#e0371f" />
      <Marker x={1351} y={150} color="#1f6fd0" />
      <Marker x={1357} y={174} color="#e0371f" />
    </g>
  </Canvas>
);

const MarketWatch = () => (
  <Dock>
    <DockHead>Market Watch: 15:14:19<button aria-label="Close Market Watch"><Close /></button></DockHead>
    <Watch>
      <colgroup><col width="83" /><col width="41" /><col width="41" /><col width="41" /></colgroup>
      <thead><tr><th>Symbol</th><th>Bid</th><th>Ask</th><th>Daily ...</th></tr></thead>
      <tbody>
        {quotes.map(([symbol, bid, ask, daily, dir, bidTone, askTone]) => (
          <tr key={symbol} className={symbol === 'XAUUSD' ? 'selected' : ''}>
            <td><Arrow $up={dir === 'up'}>{dir === 'up' ? '↗' : '↘'}</Arrow>{symbol}</td>
            <Quote $tone={bidTone}>{bid}</Quote>
            <Quote $tone={askTone}>{ask}</Quote>
            <Quote $tone={daily[0] === '-' ? 'red' : 'blue'}>{daily}</Quote>
          </tr>
        ))}
        <tr className="foot"><td colSpan="2"><Arrow $up>+</Arrow>click to add...</td><td colSpan="2">12 / 856</td></tr>
      </tbody>
    </Watch>
    <Tabs $h={19}>
      <Tab $on>Symbols</Tab><Tab>Details</Tab><Tab $bar>Trading</Tab><Tab $bar>Ticks</Tab>
    </Tabs>
  </Dock>
);

const Navigator = () => (
  <Dock>
    <DockHead>Navigator<button aria-label="Close Navigator"><Close /></button></DockHead>
    <TreeList>
      {tree.map(([cells, icon, label, bold], i) => (
        <TreeRow key={i} $root={!cells} $bold={bold}>
          {cells.split('').map((kind, n) => (
            <TreeCell key={n} $kind={kind}>
              {kind === 'o' && <Chevron open />}
              {kind === 'c' && <Chevron />}
            </TreeCell>
          ))}
          <TreeIcon><Icon name={icon} size={12} /></TreeIcon>
          {label}
        </TreeRow>
      ))}
    </TreeList>
    <Tabs $h={21}><Tab $on>Common</Tab><Tab>Favorites</Tab></Tabs>
  </Dock>
);

const lime = '#00ff00';
const dim = '#006e00';

const PowerTool = () => (
  <section>
    <MainHead>
      <Line $size={10} $bold $color="#ffd700" $center $h={9}>POWER TOOL QUANT TRADING 4.2.4</Line>
      <Line $size={8} $color="#e8e8e8" $center $gap={2}>Strategy 1.55.106 | XAUUSD | M5+D1+H1</Line>
      <Line $size={7} $color="#c0c0c0" $center $h={9}>BearsPower, BullsPower</Line>
      <Line $size={7} $color="#c0c0c0" $center $h={9}>Stefano Mastria - Trend Following</Line>
    </MainHead>
    <PanelBody $pad="11px 7px 1px 6px">
      <Line>P&amp;L MENSILE:</Line>
      <Line $size={17} $bold $color={lime} $center $h={16}>+$8425.02</Line>
      <Line $color={dim} $center $gap={4} $size={10}>(+8.48%)</Line>
      <Line $color="#00ced1" $gap={12}>POSIZIONI APERTE ORA:</Line>
      <Line $size={16} $bold $color={lime} $center $h={16}>+$0.00</Line>
      <Line $color={dim} $center $gap={4}>(+0.00%)</Line>
      <Line $color="#696969" $center>Nessuna posizione</Line>
      <Line $color="#00e600" $gap={16}>OBBIETTIVO PROFITTO MENSILE:</Line>
      <Line $size={12} $bold $color={lime} $center $h={14}>+10.0%</Line>
      <Bar $w={163} $gap={12} $color="#ffff00" />
      <Line $color="#d80000" $gap={12}>LIMITE DRAWDOWN MENSILE:</Line>
      <Line $size={12} $bold $color="#ff0000" $center $h={14}>-2.0%</Line>
      <Line $color="#d8d800" $center>(Max: -0.22%)</Line>
      <Bar $w={19} $color="#ffa500" />
      <Line $color="#f04000" $gap={12}>LIMITE DRAWDOWN GIORNALIERO:</Line>
      <Line $size={11} $bold $color={lime} $center $h={10}>+$8425.02</Line>
      <Line $color={dim} $center $gap={4}>(+8.48%)</Line>
      <Bar $w={2} $h={8} $gap={8} $color="#8b0000" />
      <Line $bold $color={lime} $gap={4}>Attivo</Line>
      <Line $gap={4}>STATO:</Line>
      <Line $size={10} $bold $color={lime} $gap={4}>Attivo</Line>
      <Line $size={7} $color="#696969">Mese: 04/2026</Line>
    </PanelBody>
  </section>
);

const License = () => (
  <section>
    <PanelHead>GESTIONE LICENZA E AGGIORNAMENTI</PanelHead>
    <PanelBody $pad="7px 7px 0 6px">
      <Pairs $col={75} $h={15}>
        <dt>Strategia:</dt><Value $color="#00e600">ATTIVA</Value>
        <dt>Utente:</dt><Value>Stefano (@StefanoMastria)</Value>
        <dt>Licenza:</dt><Value $color="#00e600">Licenza Attiva</Value>
      </Pairs>
      <Pairs $col={75} $h={15} $gap={15}>
        <dt>Versione:</dt><Value>4.2.4</Value>
        <dt>Aggiornamenti:</dt><Value $color="#00e600">Aggiornato</Value>
      </Pairs>
      <Pairs $col={75} $h={15} $gap={4}>
        <dt>Ultimo check:</dt><Value $color="#a0a0a0">2026.04.08 15:11</Value>
      </Pairs>
      <Warning>
        <svg width="8" height="8" viewBox="0 0 8 8" fill="none" stroke="#ffd700" strokeWidth="0.800"><path d="M4 .8L7.500 7.500H.5zM4 3v2.500M4 6v1" /></svg>
        Dopo installazione, riavvia MetaTrader
      </Warning>
      <UpdateButton>
        <svg width="9" height="9" viewBox="0 0 9 9" fill="none" stroke="#ccc"><path d="M.5.5h8v8h-8zM2.500 5a2 2 0 1 0 1-2.300M2.500 2v2h2" /></svg>
        Controlla Aggiornamenti
      </UpdateButton>
    </PanelBody>
  </section>
);

const InfoStrategy = () => (
  <section>
    <PanelHead>INFO STRATEGIA</PanelHead>
    <InfoBody $pad="0 0 0 6px">
      <InfoLabels>
        <Line $size={8} $gap={11}>Max Trades/Day:</Line>
        <Line $size={8} $gap={7}>Orari Trading:</Line>
        <Line $size={8} $gap={10} $h={11}>Orario:</Line>
        <Line $size={10} $bold $color="#f0a000" $h={10} $indent={22}>Fuori orario</Line>
      </InfoLabels>
      <InfoValues>
        <Line $size={8} $bold $color="#fff">2</Line>
        <Line $size={8} $bold $color="#fff" $gap={7}>04:00-12:00</Line>
      </InfoValues>
      <Permission>Trading<br />Consentito</Permission>
    </InfoBody>
  </section>
);

const LastOperations = () => (
  <PanelBody as="section" $top $pad="6px 0 10px 7px">
    <Line as="h3" $below={9} $size={13} $bold $color="#ffd700" $h={16}>ULTIME OPERAZIONI</Line>
    <ul>
      {operations.map(([lot, detail, gain]) => (
        <Operation key={detail} $gain={gain}>{lot}<p>{detail}</p><hr /></Operation>
      ))}
    </ul>
  </PanelBody>
);

const YearBalance = () => (
  <section>
    <PanelHead $size={10}>BILANCIO ANNUALE</PanelHead>
    <PanelBody $pad="8px 10px 11px 6px">
      <Line $size={10} $bold $color="#fff" $h={14}>P&amp;L ANNUALE TOTALE 2026</Line>
      <Line $size={12} $bold $color="#32cd32" $h={14}>+7786.60 USD</Line>
      <Line>(+7.84%)</Line>
      <Months>
        {months.map(([name, value, color]) => (
          <Month key={name} $current={name === 'Aprile'}>
            {name} 2026
            <MonthValue $color={color}>{value || '---'}</MonthValue>
          </Month>
        ))}
      </Months>
      <Line $size={8} $bold $color="#ffd700" $gap={17}>OBBIETTIVO PROFITTO ANNUALE</Line>
      <Line>Target: 50.0%</Line>
      <Split>
        <div>
          <Line>Raggiunto: 7.84%</Line>
          <Bar $w={32} $gap={2} $color="#006400" />
        </div>
        <Line $bold $color="#d0d0d0" $h={18}>15.67%</Line>
      </Split>
    </PanelBody>
  </section>
);

const RiskMonitor = () => (
  <section>
    <PanelHead $size={10}>RISK MANAGEMENT MONITOR</PanelHead>
    <PanelBody $pad="6px 6px 9px 6px">
      <Line $size={8} $bold $color="#ffd700">PARAMETRI MM STRATEGIA</Line>
      <Pairs $col={97} $h={12} $gap={4}>
        <dt>Risk % Balance:</dt><Value $color="#e6e600">0.20%</Value>
        <dt>Lotto Max:</dt><Value>2.00</Value>
        <dt>Capitale Base:</dt><Value $color="#00e5e5">99364 USD</Value>
      </Pairs>
      <Line $size={8} $bold $color="#ffd700" $gap={14}>ULTIME 5 OPERAZIONI</Line>
      <LotList>
        <Lots><span>#1</span><span>25/03 06:03</span><span>0.21 lots</span><span>-196 USD</span></Lots>
        <Lots><span>#2</span><span>25/03 05:09</span><span>0.21 lots</span><span>-199 USD</span></Lots>
        <Lots><span>#3</span><span>25/03 05:00</span><span>0.21 lots</span><span>-231 USD</span></Lots>
        <Lots $empty><span>#4</span><span>---</span></Lots>
        <Lots $empty><span>#5</span><span>---</span></Lots>
      </LotList>
      <Line $size={8} $bold $color="#ffd700" $gap={15}>PROSSIMO ORDINE (STIMATO)</Line>
      <Pairs $col={97} $h={12} $gap={4}>
        <dt>Equity attuale:</dt><Value>107787 USD</Value>
        <dt>Lotto stimato:</dt><Value $color="#e6e600">0.22</Value>
        <dt>Rischio stimato:</dt><Value $color="#f09000">216 USD (0.20%)</Value>
      </Pairs>
      <Line $size={8} $bold $color="#ffd700" $gap={14}>ORDINE IN CORSO</Line>
      <Line $color="#808080" $gap={2}>Nessun ordine attivo</Line>
      <Line $size={8} $bold $color="#ffd700" $gap={34}>TRADING DAYS</Line>
      <Days>
        {['LUN', 'MAR', 'MER', 'GIO', 'VEN'].map((d) => <Day key={d} $on={d === 'MER'}>{d}</Day>)}
      </Days>
    </PanelBody>
  </section>
);

const App = () => (
  <>
    <GlobalStyle />
    <Page>
      <TitleBar>
        <Owl size={12} />
        <TitleText>3000097482 - Darwinex-Demo: Demo Account - Hedge - Tradeslide Trading Tech Limited - [XAUUSD,M5]</TitleText>
        <WindowButtons $gap={26} $right={5} $color="#222">
          <button aria-label="Minimize"><Minimize /></button>
          <button aria-label="Restore"><Restore /></button>
          <button aria-label="Close">
            <Close size={9} />
            <svg width="9" height="9" viewBox="0 0 9 9"><circle cx="5" cy="4.500" r="3.500" fill="#5050f0" stroke="#222" /></svg>
          </button>
        </WindowButtons>
      </TitleBar>
      <MenuBar>
        <Icon name="candles" size={11} />
        {['File', 'View', 'Insert', 'Charts', 'Tools', 'Window', 'Help'].map((m) => <button key={m}>{m}</button>)}
        <Spacer />
        <WindowButtons $gap={7} $right={5} $color="#a8a8a8">
          <button aria-label="Minimize chart"><Minimize /></button>
          <button aria-label="Restore chart"><Restore size={7} /></button>
          <button aria-label="Close chart"><Close size={6} /></button>
        </WindowButtons>
      </MenuBar>
      <ToolBar>
        <Tool aria-label="Chart type"><Icon name="line" size={14} /></Tool><Caret />
        <Tool aria-label="Template"><Icon name="template" size={14} /></Tool><Caret />
        <Tool aria-label="Deposit"><Icon name="dollar" /></Tool>
        <Divider />
        <Tool>IDE</Tool>
        {['bag', 'signal', 'cloud', 'globe'].map((n) => <Tool key={n} aria-label={n}><Icon name={n} size={14} /></Tool>)}
        <Divider />
        <Tool $w={78} $dark $on><Icon name="play" size={11} />Algo Trading</Tool>
        <Tool $w={71} $dark><Icon name="order" size={12} />New Order</Tool>
        <Divider />
        <Tool $on aria-label="Bars"><Icon name="ohlc" /></Tool>
        <Tool aria-label="Candles"><Icon name="candles" /></Tool>
        <Tool aria-label="Line"><Icon name="zig" /></Tool>
        <Divider />
        {['zoomIn', 'zoomOut', 'tiles'].map((n) => <Tool key={n} aria-label={n}><Icon name={n} size={14} /></Tool>)}
        <Divider />
        <Tool $on aria-label="Auto scroll"><Icon name="shift" size={15} /></Tool>
        <Tool $on aria-label="Chart shift"><Icon name="scroll" size={15} /></Tool>
        <Divider />
        <Tool aria-label="Screenshot"><Icon name="camera" size={14} /></Tool>
        <Divider $dots />
        <Tool $on aria-label="Cursor"><Icon name="cursor" /></Tool>
        <Tool aria-label="Crosshair"><Icon name="cross" /></Tool>
        <Divider />
        {['vline', 'hline', 'trend', 'channel', 'fibo', 'text', 'shapes'].map((n) => <Tool key={n} aria-label={n}><Icon name={n} size={14} /></Tool>)}
        <Caret />
        <Divider $dots />
        {['M1', 'M5', 'M15', 'M30', 'H1', 'H4', 'D1', 'W1', 'MN'].map((t) => <TimeFrame key={t} $on={t === 'M5'}>{t}</TimeFrame>)}
        <Spacer />
        <Tool $w={14} aria-label="Search"><Icon name="search" size={12} /></Tool>
        <Account>
          <svg width="10" height="10" viewBox="0 0 10 10" fill="none" stroke="#333"><circle cx="5" cy="5" r="4.500" /><circle cx="5" cy="4" r="1.500" /><path d="M2 8c1-2 5-2 6 0" /></svg>
          <Badge>1</Badge>
        </Account>
        <Level>
          <svg width="7" height="7" viewBox="0 0 7 7" fill="none" stroke="#1fa64a"><path d="M3.500.5l2.500 3H4.500v3h-2v-3H1z" /></svg>
          LVL
        </Level>
        <Meter />
      </ToolBar>

      <Main>
        <Side>
          <MarketWatch />
          <Navigator />
        </Side>
        <ChartArea>
          <Chart>
            <Plot>
              <PriceBars />
              <Caption>
                <svg width="11" height="8" viewBox="0 0 11 8"><path d="M0 0h11v8H0z" fill="#fff" /><path d="M1 1.500h4M1 4h4M1 6.500h4" stroke="#d03030" /><path d="M6 1.500h4M6 4h4M6 6.500h4" stroke="#2060c0" /></svg>
                <svg width="11" height="9" viewBox="0 0 11 9"><path d="M0 0h11v9H0z" fill="#fff" /><path d="M1 0h2v6H1zM6 5h2v4H6z" fill="#d03030" /><path d="M4 0h1v6h1V3h4V0h1v9H9V5H8v4H4z" fill="#2060c0" /></svg>
                <span>XAUUSD, M5:&nbsp; Gold vs US Dollar</span>
              </Caption>
              <Caption $right>Strategy 1.55.106<Icon name="hat" size={10} /></Caption>
              <Comments>
                <Comment $color="#e6c200">Target: London + NY Sessions</Comment>
                <Comment $color="#32b432">Window: Full Day Trading (14h)</Comment>
                <Comment $big $color="#1e90ff">Trading Hours: 04:00 - 12:00 (GMT+1) = 06:00-20:00 GMT</Comment>
                <Comment>{dashes}</Comment>
                <Comment>Total P/L so far: -212.52</Comment>
                <Comment>Total profits/losses so far: 0/1</Comment>
                <Comment>Account Balance: 107786.60</Comment>
                <Comment>Open P/L: 0.00</Comment>
                <Comment>{'Last Signal:   -'}</Comment>
                <Comment $h={10}>{dashes}</Comment>
                <Comment>Generated by StrategyQuant EA Wizard</Comment>
                <Comment $big>Strategy 1.55.106</Comment>
              </Comments>
              <Board>
                <Column $w={209}><PowerTool /><License /></Column>
                <Column $w={240}><InfoStrategy /><LastOperations /></Column>
                <Column $w={240}><YearBalance /></Column>
                <Column $w={209}><RiskMonitor /></Column>
              </Board>
              <TradeLines />
            </Plot>
            <PriceAxis>
              <PriceList>{prices.map((p, i) => <li key={p}>{i !== hintStep && p}</li>)}</PriceList>
            </PriceAxis>
            <TimeAxis>{times.map((t) => <li key={t}>{t}</li>)}</TimeAxis>
            <PriceTag>4804.32</PriceTag>
            <Tooltip role="tooltip">Vertical scale</Tooltip>
          </Chart>
          <Tabs $h={18} $line="#999">
            <Tab $on>XAUUSD,M5</Tab><Tab>XAUUSD,Daily</Tab>
            <ScrollArrows><span>‹</span><span>›</span></ScrollArrows>
          </Tabs>
        </ChartArea>
      </Main>

      <ToolBox>
        <ToolBoxEdge><button aria-label="Close Toolbox"><Close /></button><span>Toolbox</span></ToolBoxEdge>
        <ToolBoxBody>
          <TradeTable>
            <colgroup>
              <col width="13.2%" /><col width="9.1%" /><col width="5.5%" /><col width="10.2%" /><col width="10.1%" />
              <col width="10.2%" /><col width="10.1%" /><col width="10.2%" /><col width="10.1%" /><col />
            </colgroup>
            <thead>
              <tr>
                <th>Symbol &nbsp; &nbsp; ▴</th><th>Ticket</th><th>Time</th><th>Type</th><th>Volume</th>
                <th>Price</th><th>S / L</th><th>T / P</th><th>Price</th><th>Profit</th>
              </tr>
            </thead>
            <tbody>
              <tr><td colSpan="9">{' •   Balance: 107 786.60 USD  Equity: 107 786.60  Free Margin: 107 786.60'}</td><td>0.00</td></tr>
            </tbody>
          </TradeTable>
          <Tabs $h={18}>
            <Tab $on>Trade</Tab>
            {boxTabs.map((t, i) => <Tab key={t} $bar={i > 0}>{t}</Tab>)}
            <Services>
              <Service href="#market"><Icon name="bag" size={11} />Market</Service>
              <Service href="#signals" $off><Icon name="signal" size={11} />Signals</Service>
              <Service href="#vps"><Icon name="cloud" size={12} />VPS</Service>
              <Service href="#tester"><Icon name="chip" size={12} />Tester</Service>
            </Services>
          </Tabs>
        </ToolBoxBody>
      </ToolBox>
      <StatusBar>
        For Help, press F1
        <Spacer />
        <StatusCell $w={96}>Default</StatusCell>
        <StatusCell $w={74} /><StatusCell $w={53} /><StatusCell $w={53} /><StatusCell $w={51} /><StatusCell $w={53} /><StatusCell $w={49} />
        <StatusCell $w={91}>
          <svg width="11" height="9" viewBox="0 0 11 9" stroke="#1fa64a" strokeWidth="1.500"><path d="M1 9V7M3.500 9V6M6 9V4M8.300 9V2M10.300 9V0" /></svg>
          148 / 0 Mb
        </StatusCell>
      </StatusBar>
      <TaskBar>
        <Start aria-label="Start">
          <svg width="13" height="13" viewBox="0 0 13 13" fill="#fff"><path d="M0 2l5.500-.8v5H0zM6.500 1L13 0v6.200H6.500zM0 7h5.500v5L0 11.200zM6.500 7H13v6l-6.500-.9z" /></svg>
        </Start>
        <Search>
          <svg width="13" height="13" viewBox="0 0 13 13" fill="none" stroke="#333"><circle cx="8" cy="5" r="4" /><path d="M5 8l-4.500 4.500" /></svg>
          <input type="text" aria-label="Search" placeholder="Type here to search" />
        </Search>
        <TaskButton aria-label="Task View">
          <svg width="13" height="13" viewBox="0 0 13 13" fill="none" stroke="#ddd"><path d="M1 1v1.500h7V1M1.500 4.500h6v4h-6zM1 12v-1.500h7V12M11 1v11M10 5.500h2" /></svg>
        </TaskButton>
        <TaskButton aria-label="Document">
          <svg width="13" height="16" viewBox="0 0 13 16"><path d="M1 0h8l3 3v13H1z" fill="#f2f2f2" /><path d="M9 0v3h3z" fill="#bbb" /></svg>
        </TaskButton>
        <TaskButton aria-label="Explorer">
          <svg width="17" height="14" viewBox="0 0 17 14"><path d="M0 0h6l2 2h9v12H0z" fill="#f5c242" /><path d="M3 8h11v6h-3v-3H6v3H3z" fill="#3a9be0" /></svg>
        </TaskButton>
        <TaskButton $run aria-label="Chrome"><Chrome /></TaskButton>
        {[1, 2, 3, 4, 5, 6, 7].map((n) => <TaskButton key={n} $run aria-label={`MetaTrader ${n}`}><MetaTrader /></TaskButton>)}
        {[1, 2, 3, 4].map((n) => <TaskButton key={n} $run $on={n === 4} aria-label={`Darwinex ${n}`}><Owl /></TaskButton>)}
        <TaskButton $run aria-label="File sync">
          <svg width="18" height="18" viewBox="0 0 18 18"><path d="M0 0h7L5 2l3 3-2 2-3-3-3 3z" fill="#35b5ee" /><path d="M6 7V5a3 3 0 0 1 6 0v2" fill="none" stroke="#ccc" strokeWidth="1.500" /><path d="M4 7h9v7H4z" fill="#d8d8d8" /><path d="M18 18h-7l2-2-3-3 2-2 3 3 3-3z" fill="#5fc92a" /></svg>
        </TaskButton>
        <TaskButton $run aria-label="Darwinex 5"><Owl /></TaskButton>
        <Tray>
          <svg width="9" height="6" viewBox="0 0 9 6" fill="none" stroke="#ddd"><path d="M.5 5l4-4 4 4" /></svg>
          <svg width="12" height="11" viewBox="0 0 12 11" fill="none" stroke="#ddd"><path d="M3 2.500h8.500v5.500H4M7 8v2.500M4 10.500h6M.5 1h3v3h-3zM2 4v5" /></svg>
          <svg width="13" height="12" viewBox="0 0 13 12" fill="none" stroke="#ddd"><path d="M.5 4.500h2l3-3v9l-3-3h-2z" /><circle cx="9" cy="8.500" r="3.500" fill="#d62030" stroke="none" /><path d="M7.800 7.300l2.400 2.400M10.200 7.300L7.800 9.700" stroke="#fff" /></svg>
          <span>ITA</span>
          <Clock>12:14 PM<br />4/8/2026</Clock>
          <svg width="13" height="13" viewBox="0 0 13 13" fill="none" stroke="#ddd"><path d="M.5.500h12v9H8.500l-2 2-2-2h-4z" /></svg>
        </Tray>
      </TaskBar>
    </Page>
  </>
);

export default App;
